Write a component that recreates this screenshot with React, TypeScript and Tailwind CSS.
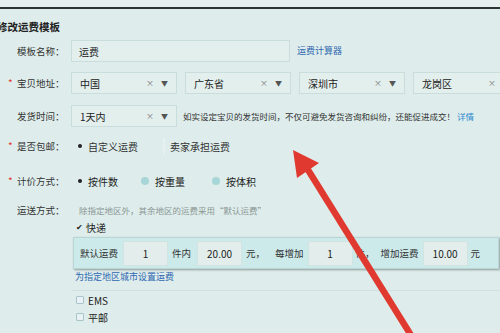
import React from 'react';

const font = { fontFamily: '"Noto Sans CJK SC", "Noto Sans", sans-serif' };

function Label({ text, required }: { text: string; required?: boolean }) {
  return (
    <div className="relative w-[70px] shrink-0 pl-[17px] text-[9.5px] text-[#333] whitespace-nowrap">
      {required && (
        <span className="absolute left-[8px] top-[-1px] text-[10px] text-[#e0392f]">*</span>
      )}
      {text}
    </div>
  );
}

function Select({ value, width = 'w-[106px]' }: { value: string; width?: string }) {
  return (
    <div
      className={`${width} h-[22px] shrink-0 flex items-center border border-[#c9dedc] bg-[#e3efed] pl-[8px] pr-[8px] text-[10px] text-[#222]`}
    >
      <span className="flex-1">{value}</span>
      <span className="text-[8px] text-[#777]">×</span>
      <span className="ml-[7px] text-[7px] text-[#555]">▼</span>
    </div>
  );
}

function Radio({ kind }: { kind: 'on' | 'faint' | 'teal' }) {
  if (kind === 'on') {
    return (
      <span className="w-[8px] h-[8px] flex items-center justify-center">
        <span className="w-[4px] h-[4px] rounded-full bg-[#222]" />
      </span>
    );
  }
  if (kind === 'teal') {
    return <span className="w-[8px] h-[8px] rounded-full bg-[#a7d6d9]" />;
  }
  return <span className="w-[9px] h-[9px] rounded-full border border-[#e6f1f0] bg-[#e4f0ef]" />;
}

function Box({ value, ml }: { value: string; ml: string }) {
  return (
    <div
      className={`${ml} w-[45px] h-[25px] shrink-0 flex items-center justify-center bg-[#e3eeec] border border-[#d2e4e2] text-[10px] text-[#222]`}
    >
      {value}
    </div>
  );
}

export default function App() {
  return (
    <div className="relative w-[500px] h-[333px] overflow-hidden bg-[#deedeb]" style={font}>
      <div className="h-[7px] bg-[#e6eeee]" />
      <div className="h-[2px] bg-[#2e3436]" />

      <div className="mt-[10px] ml-[-3px] h-[16px] flex items-center text-[10.5px] font-bold text-[#222]">
        修改运费模板
      </div>

      {/* 模板名称 */}
      <div className="mt-[5px] h-[22px] flex items-center">
        <Label text="模板名称：" />
        <div className="ml-[1px] w-[219px] h-[22px] flex items-center border border-[#c9dedc] bg-[#e3efed] pl-[7px] text-[10px] text-[#222]">
          运费
        </div>
        <span className="ml-[7px] text-[9px] text-[#2f67b0]">运费计算器</span>
      </div>

      {/* 宝贝地址 */}
      <div className="mt-[10px] h-[22px] flex items-center">
        <Label text="宝贝地址：" required />
        <div className="ml-[1px] flex gap-[8px]">
          <Select value="中国" />
          <Select value="广东省" />
          <Select value="深圳市" />
          <Select value="龙岗区" />
        </div>
      </div>

      {/* 发货时间 */}
      <div className="mt-[11px] h-[22px] flex items-center">
        <Label text="发货时间：" />
        <div className="ml-[1px]">
          <Select value="1天内" />
        </div>
        <span className="ml-[6px] text-[8.5px] text-[#333] whitespace-nowrap">
          如实设定宝贝的发货时间，不仅可避免发货咨询和纠纷，还能促进成交！
          <span className="ml-[2px] text-[#2f8ad0]">详情</span>
        </span>
      </div>

      {/* 是否包邮 */}
      <div className="mt-[9px] h-[20px] flex items-center">
        <Label text="是否包邮：" required />
        <div className="ml-[6px] flex items-center text-[10px] text-[#333]">
          <Radio kind="on" />
          <span className="ml-[4px]">自定义运费</span>
          <span className="ml-[25px]">
            <Radio kind="faint" />
          </span>
          <span className="ml-[5px]">卖家承担运费</span>
        </div>
      </div>

      {/* 计价方式 */}
      <div className="mt-[15px] h-[20px] flex items-center">
        <Label text="计价方式：" required />
        <div className="ml-[6px] flex items-center text-[10px] text-[#222]">
          <Radio kind="on" />
          <span className="ml-[4px]">按件数</span>
          <span className="ml-[23px] flex">
            <Radio kind="teal" />
          </span>
          <span className="ml-[6px]">按重量</span>
          <span className="ml-[27px] flex">
            <Radio kind="teal" />
          </span>
          <span className="ml-[6px]">按体积</span>
        </div>
      </div>

      {/* 运送方式 */}
      <div className="mt-[11px] h-[16px] flex items-center">
        <Label text="运送方式：" />
        <span className="ml-[9px] text-[8.5px] text-[#8a9594] whitespace-nowrap">
          除指定地区外，其余地区的运费采用“默认运费”
        </span>
      </div>

      <div className="ml-[75px] mt-[2px] h-[14px] flex items-center text-[10px] text-[#222]">
        <span className="w-[8px] h-[8px] flex items-center justify-center text-[8px] leading-none text-[#222]">
          ✔
        </span>
        <span className="ml-[3px]">快递</span>
      </div>

      <div className="ml-[73px] mt-[3px] w-[426px] h-[32px] flex items-center bg-[#cdeaea] border border-[#b8d6d5] shadow-[1px_1px_2px_rgba(0,0,0,0.35)] text-[9.5px] text-[#333] whitespace-nowrap">
        <span className="ml-[6px]">默认运费</span>
        <Box value="1" ml="ml-[5px]" />
        <span className="ml-[4px]">件内</span>
        <Box value="20.00" ml="ml-[6px]" />
        <span className="ml-[4px]">元，</span>
        <span className="ml-[10px]">每增加</span>
        <Box value="1" ml="ml-[4px]" />
        <span className="ml-[3px]">件，</span>
        <span className="ml-[6px]">增加运费</span>
        <Box value="10.00" ml="ml-[4px]" />
        <span className="ml-[3px]">元</span>
      </div>

      <div className="ml-[75px] mt-[2px] h-[12px] flex items-center text-[9px] text-[#2f67b0]">
        为指定地区城市设置运费
      </div>

      <div className="ml-[72px] mt-[7px] h-px bg-[#cfe1df]" />

      <div className="ml-[76px] mt-[2px] h-[14px] flex items-center text-[10px] text-[#222]">
        <span className="w-[8px] h-[8px] border border-[#aac4cc] bg-[#e8f2f4] rounded-[1px]" />
        <span className="ml-[4px]">EMS</span>
      </div>
      <div className="ml-[76px] mt-[3px] h-[14px] flex items-center text-[10px] text-[#222]">
        <span className="w-[8px] h-[8px] border border-[#aac4cc] bg-[#e8f2f4] rounded-[1px]" />
        <span className="ml-[4px]">平邮</span>
      </div>

      {/* red annotation arrow */}
      <svg className="absolute left-0 top-0 pointer-events-none" width="500" height="333" viewBox="0 0 500 333">
        <line x1="305" y1="165" x2="414" y2="340" stroke="#e0392f" strokeWidth="6.5" />
        <polygon points="293,150 319,163 297,178" fill="#e0392f" />
      </svg>
    </div>
  );
}
